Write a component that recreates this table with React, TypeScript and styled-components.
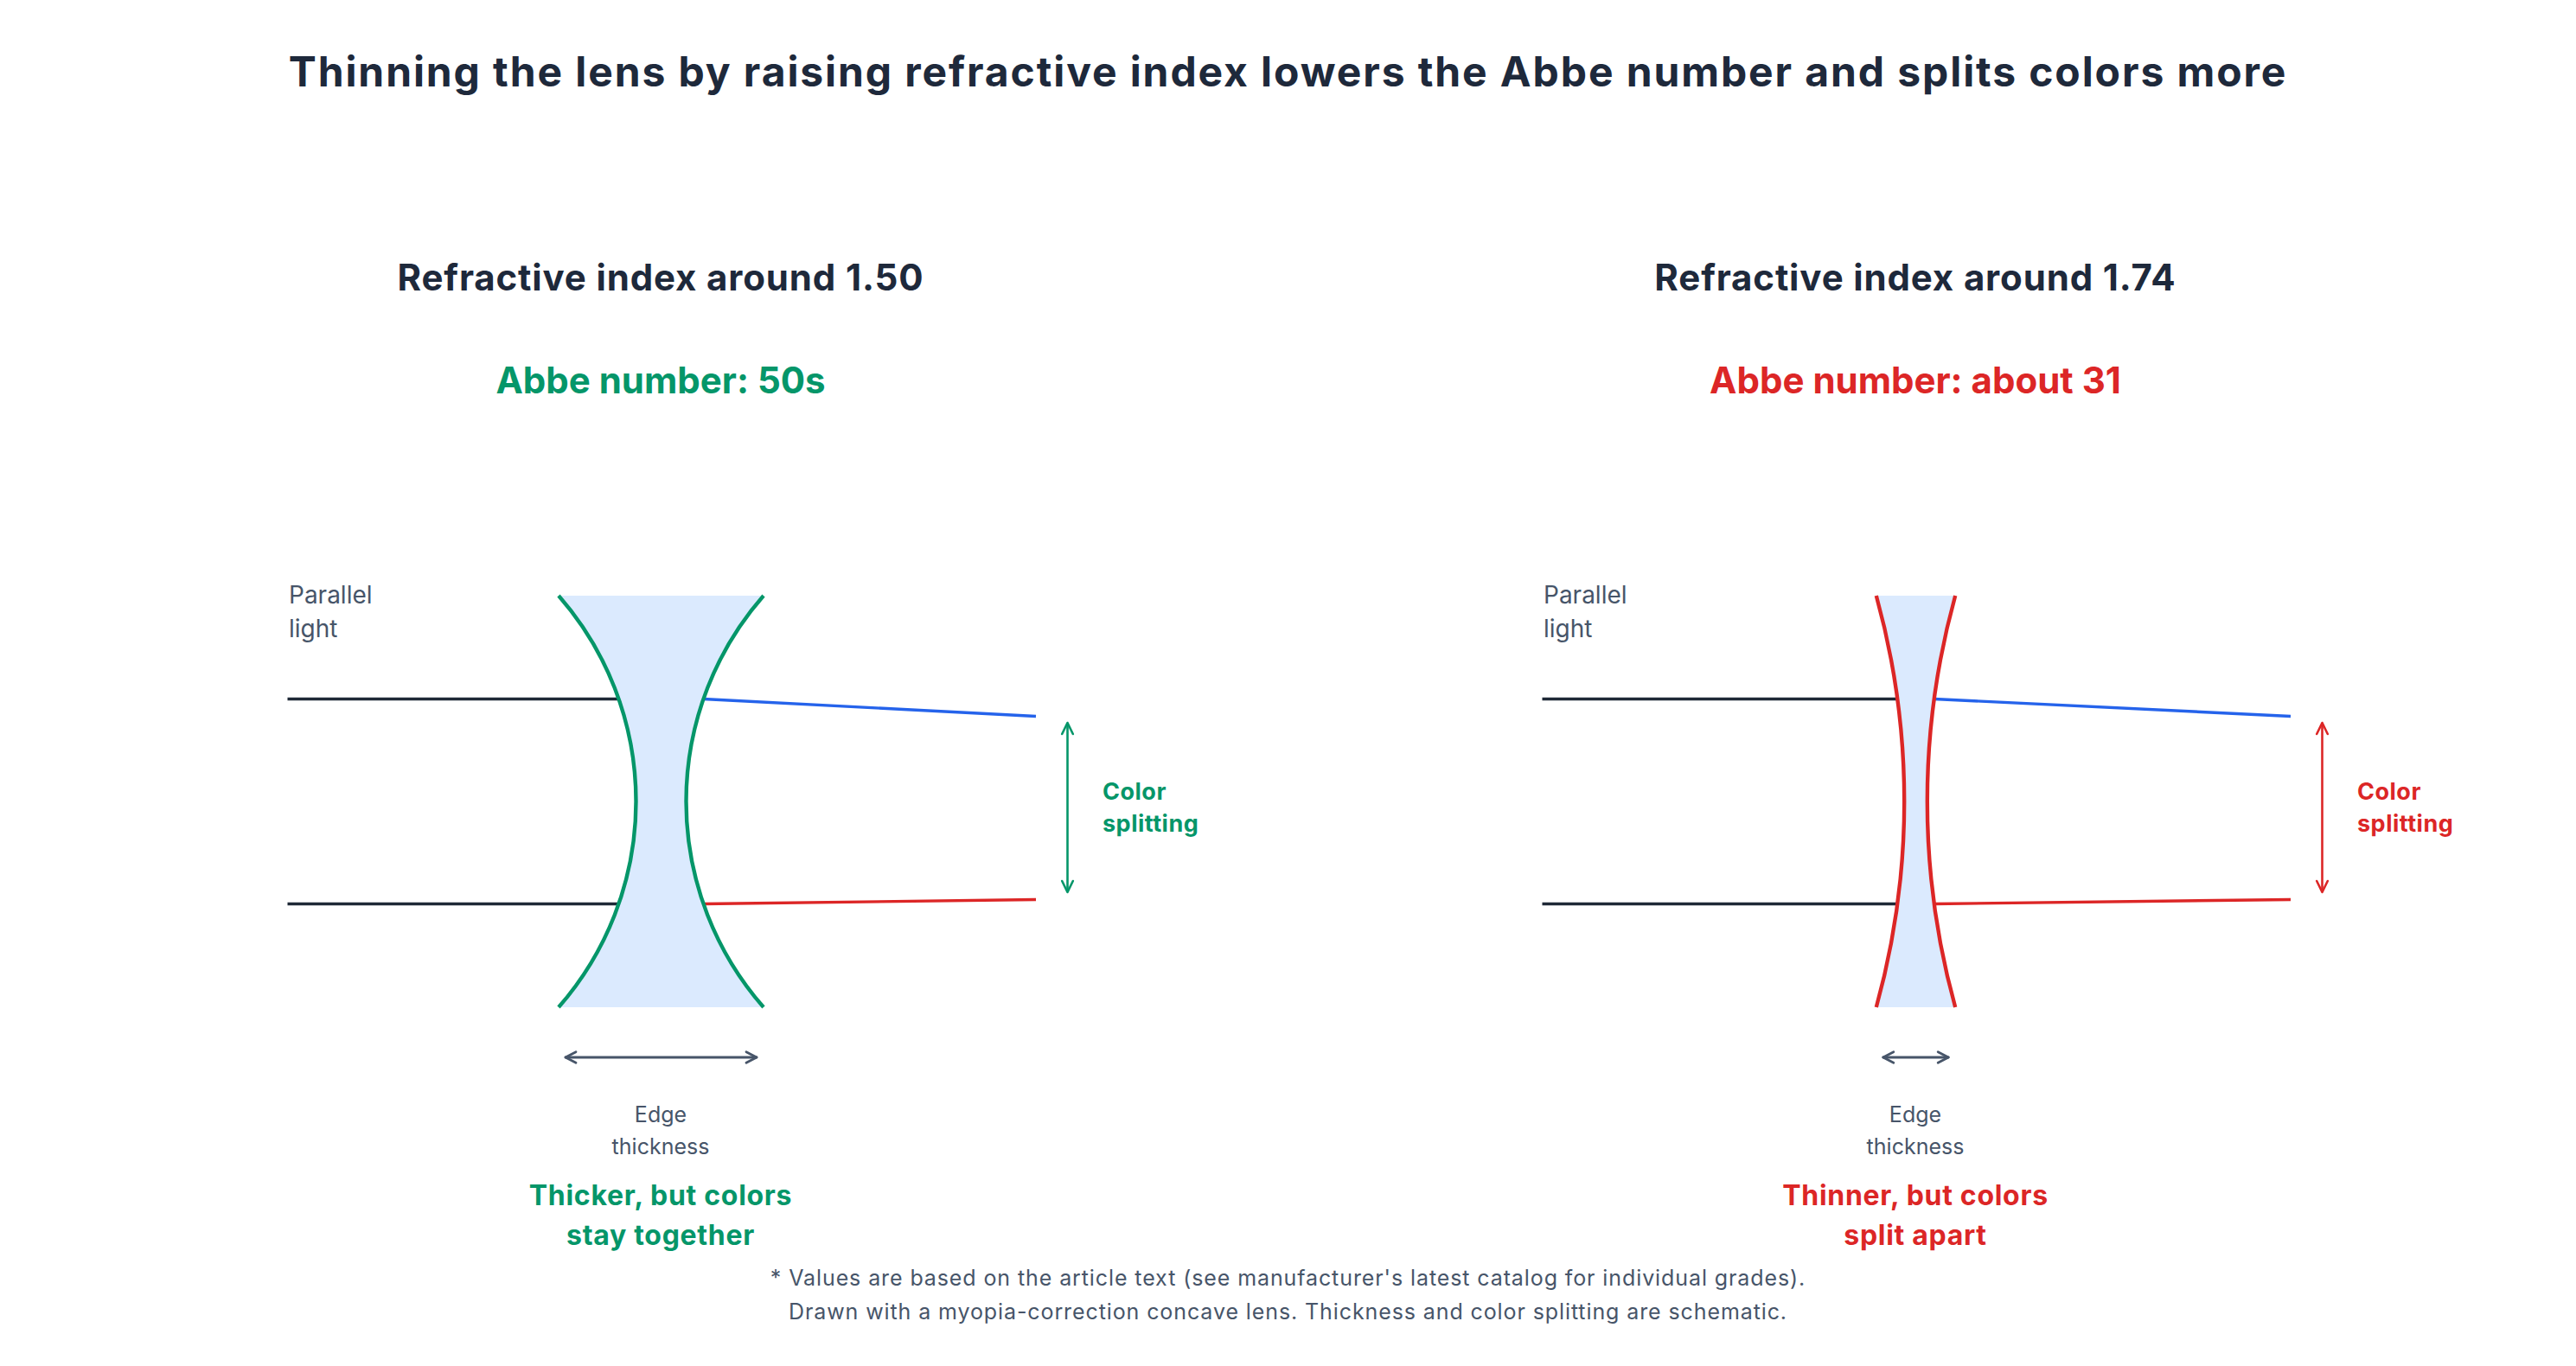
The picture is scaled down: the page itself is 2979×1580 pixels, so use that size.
import styled, { createGlobalStyle } from "styled-components";

const GlobalStyle = createGlobalStyle`
  html, body {
    margin: 0;
    padding: 0;
    background: #fff;
  }
  body {
    font-family: Inter, "Noto Sans", "Liberation Sans", sans-serif;
    color: #1e293b;
  }
`;

const GREEN = "#059669";
const RED = "#dc2626";
const BLUE = "#2563eb";
const SLATE = "#475569";
const INK = "#1f2937";

// diagram geometry (svg units == px)
const W = 1451;
const H = 580;
const CX = 725.5;
const TOP = 30;
const BOTTOM = 506;
const MID = (TOP + BOTTOM) / 2;
const RAY_DY = 118.5;

interface Lens {
  title: string;
  abbe: string;
  tone: string;
  halfWidth: number;
  halfGap: number;
  caption: [string, string];
}

const lenses: Lens[] = [
  {
    title: "Refractive index around 1.50",
    abbe: "Abbe number: 50s",
    tone: GREEN,
    halfWidth: 118.5,
    halfGap: 29,
    caption: ["Thicker, but colors", "stay together"],
  },
  {
    title: "Refractive index around 1.74",
    abbe: "Abbe number: about 31",
    tone: RED,
    halfWidth: 45.7,
    halfGap: 13.3,
    caption: ["Thinner, but colors", "split apart"],
  },
];

function Diagram({ lens }: { lens: Lens }) {
  const { halfWidth: hw, halfGap: g, tone } = lens;
  const half = (BOTTOM - TOP) / 2;
  const sag = hw - g;
  const r = (half * half + sag * sag) / (2 * sag);
  const off = Math.sqrt(r * r - RAY_DY * RAY_DY);
  const leftHit = CX - g - r + off;
  const rightHit = CX + g + r - off;
  const yUp = MID - RAY_DY;
  const yDown = MID + RAY_DY;

  const leftArc = `M ${CX - hw} ${TOP} A ${r} ${r} 0 0 1 ${CX - hw} ${BOTTOM}`;
  const rightArc = `M ${CX + hw} ${TOP} A ${r} ${r} 0 0 0 ${CX + hw} ${BOTTOM}`;
  const body = `M ${CX - hw} ${TOP} A ${r} ${r} 0 0 1 ${CX - hw} ${BOTTOM} L ${CX + hw} ${BOTTOM} A ${r} ${r} 0 0 1 ${CX + hw} ${TOP} Z`;

  const ax = CX + 470;
  const ex1 = CX - hw + 8;
  const ex2 = CX + hw - 8;
  const ey = 564;

  return (
    <svg width={W} height={H} viewBox={`0 0 ${W} ${H}`}>
      <g fontFamily="Inter, 'Noto Sans', sans-serif" fontSize={28} fill={SLATE}>
        <text x={295} y={38.5}>Parallel</text>
        <text x={295} y={77.6}>light</text>
      </g>

      <path d={body} fill="#dbeafe" />

      <g strokeWidth={3.4}>
        <line x1={293.5} y1={yUp} x2={leftHit} y2={yUp} stroke={INK} />
        <line x1={293.5} y1={yDown} x2={leftHit} y2={yDown} stroke={INK} />
        <line x1={rightHit} y1={yUp} x2={CX + 433.5} y2={yUp + 20} stroke={BLUE} />
        <line x1={rightHit} y1={yDown} x2={CX + 433.5} y2={yDown - 5} stroke={RED} />
      </g>

      <g fill="none" stroke={tone} strokeWidth={4.4}>
        <path d={leftArc} />
        <path d={rightArc} />
      </g>

      <g fill="none" stroke={tone} strokeWidth={2.6} strokeLinecap="round" strokeLinejoin="round">
        <line x1={ax} y1={178} x2={ax} y2={372} />
        <polyline points={`${ax - 6.3},${190} ${ax},${177} ${ax + 6.3},${190}`} />
        <polyline points={`${ax - 6.3},${360} ${ax},${373} ${ax + 6.3},${360}`} />
      </g>

      <g
        fontFamily="Inter, 'Noto Sans', sans-serif"
        fontWeight={700}
        fontSize={27}
        letterSpacing={0.5}
        fill={tone}
      >
        <text x={CX + 510.5} y={265.7}>Color</text>
        <text x={CX + 510.5} y={303.3}>splitting</text>
      </g>

      <g fill="none" stroke={SLATE} strokeWidth={2.8} strokeLinecap="round" strokeLinejoin="round">
        <line x1={ex1} y1={ey} x2={ex2} y2={ey} />
        <polyline points={`${ex1 + 12},${ey - 6.3} ${ex1},${ey} ${ex1 + 12},${ey + 6.3}`} />
        <polyline points={`${ex2 - 12},${ey - 6.3} ${ex2},${ey} ${ex2 - 12},${ey + 6.3}`} />
      </g>
    </svg>
  );
}

export default function App() {
  return (
    <Page>
      <GlobalStyle />
      <Title>
        Thinning the lens by raising refractive index lowers the Abbe number and splits colors more
      </Title>
      <Columns>
        {lenses.map((lens) => (
          <Column key={lens.title}>
            <Heading>{lens.title}</Heading>
            <Abbe $tone={lens.tone}>{lens.abbe}</Abbe>
            <Figure>
              <Diagram lens={lens} />
            </Figure>
            <EdgeLabel>
              Edge
              <br />
              thickness
            </EdgeLabel>
            <Caption $tone={lens.tone}>
              {lens.caption[0]}
              <br />
              {lens.caption[1]}
            </Caption>
          </Column>
        ))}
      </Columns>
      <Note>
        * Values are based on the article text (see manufacturer's latest catalog for individual grades).
        <br />
        Drawn with a myopia-correction concave lens. Thickness and color splitting are schematic.
      </Note>
    </Page>
  );
}

const Page = styled.div`
  width: 2979px;
  height: 1580px;
  overflow: hidden;
  display: flex;
  flex-direction: column;
  align-items: center;
  box-sizing: border-box;
  padding-top: 54px;
`;

const Title = styled.h1`
  margin: 0;
  font-size: 48px;
  line-height: 1.2;
  font-weight: 700;
  letter-spacing: 1.9px;
  color: #1e293b;
  text-align: center;
  white-space: nowrap;
`;

const Columns = styled.div`
  display: grid;
  grid-template-columns: ${W}px ${W}px;
  width: ${W * 2}px;
  margin-top: 184px;
`;

const Column = styled.section`
  display: flex;
  flex-direction: column;
  align-items: center;
`;

const Heading = styled.h2`
  margin: 0;
  font-size: 42px;
  line-height: 1.2;
  font-weight: 700;
  letter-spacing: 0.85px;
  color: #1e293b;
  white-space: nowrap;
`;

const Abbe = styled.div<{ $tone: string }>`
  margin-top: 69px;
  font-size: 42px;
  line-height: 1.2;
  font-weight: 700;
  color: ${(p) => p.$tone};
  white-space: nowrap;
`;

const Figure = styled.div`
  margin-top: 194px;
  width: ${W}px;
  height: ${H}px;
  svg {
    display: block;
  }
`;

const EdgeLabel = styled.div`
  margin-top: 32px;
  font-size: 25px;
  line-height: 37px;
  color: ${SLATE};
  text-align: center;
`;

const Caption = styled.div<{ $tone: string }>`
  margin-top: 15px;
  font-size: 32px;
  line-height: 46px;
  font-weight: 700;
  letter-spacing: 0.7px;
  color: ${(p) => p.$tone};
  text-align: center;
`;

const Note = styled.p`
  margin: 7px 0 0;
  font-size: 25px;
  line-height: 39px;
  letter-spacing: 0.9px;
  color: ${SLATE};
  text-align: center;
`;
